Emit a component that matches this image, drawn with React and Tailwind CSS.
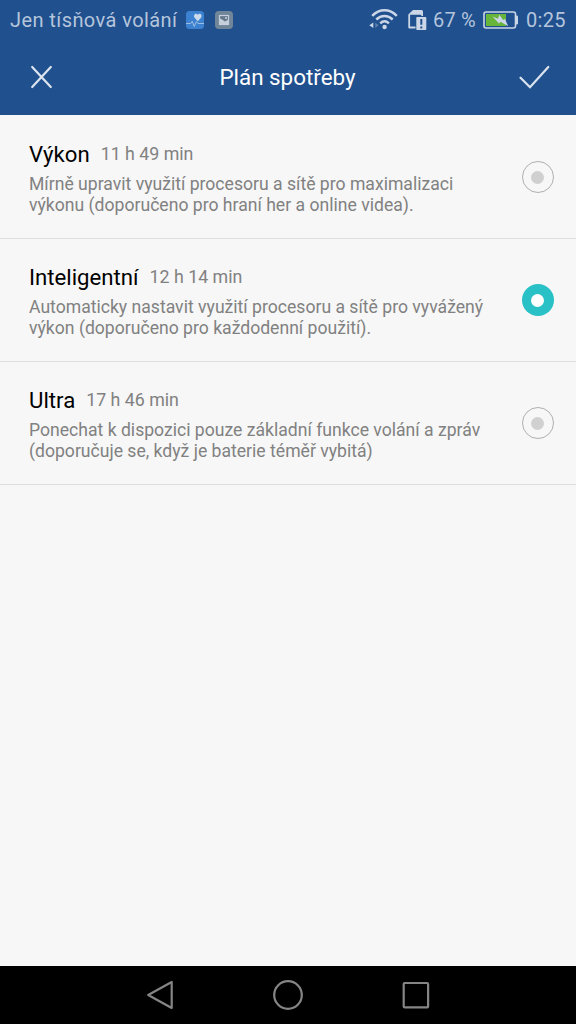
import { useState } from "react";
import clsx from "clsx";

const plans = [
  {
    id: "performance",
    title: "Výkon",
    time: "11 h 49 min",
    lines: ["Mírně upravit využití procesoru a sítě pro maximalizaci", "výkonu (doporučeno pro hraní her a online videa)."],
  },
  {
    id: "smart",
    title: "Inteligentní",
    time: "12 h 14 min",
    lines: ["Automaticky nastavit využití procesoru a sítě pro vyvážený", "výkon (doporučeno pro každodenní použití)."],
  },
  {
    id: "ultra",
    title: "Ultra",
    time: "17 h 46 min",
    lines: ["Ponechat k dispozici pouze základní funkce volání a zpráv", "(doporučuje se, když je baterie téměř vybitá)"],
  },
];

const HealthIcon = () => (
  <svg viewBox="0 0 18 18" className="h-[18px] w-[18px]">
    <rect width="18" height="18" rx="3.5" fill="#3c82d0" />
    <path d="M11.8 10.2 8.6 6.8C6.8 4.3 9.8 1.4 11.8 3.7c2-2.3 5 .6 3.2 3.1Z" fill="#ccdaec" />
    <path d="M0 12.5h4.8l1.4-2.2 2 5.2 2.2-5 1.5 2H18" fill="none" stroke="#9dbce2" strokeWidth="1" />
  </svg>
);

const PictureIcon = () => (
  <svg viewBox="0 0 18 18" className="h-[18px] w-[18px]">
    <rect width="18" height="18" rx="4" fill="#728699" />
    <rect x="4.5" y="4.5" width="9" height="9" fill="#66798c" stroke="#c6d0dc" strokeWidth="1.2" />
    <path d="M5 7.5 7.500 8.800 9.800 10.500 13 9V13H5Z" fill="#c6d0dc" />
    <circle cx="11" cy="7" r="1" fill="#c6d0dc" />
  </svg>
);

const WifiIcon = () => (
  <svg viewBox="0 0 30 22" className="h-[22px] w-[30px]" fill="none" stroke="#cbd6e7">
    <path d="M3.2 6.8C10.5-.6 20.5-.6 27.8 6.8" strokeWidth="2.5" />
    <path d="M7.3 10.5C12 5.9 19 5.9 23.7 10.5" strokeWidth="2.5" />
    <path d="M11.2 14.3C13.9 11.8 17.2 11.8 19.9 14.3" strokeWidth="2.5" />
    <circle cx="15.6" cy="18" r="2.2" fill="#cbd6e7" stroke="none" />
    <path d="M4.3 13.5v5.6L.3 16.3Z" fill="#cbd6e7" stroke="none" />
    <path d="M6.3 13.5v5.6l3.3-2.8Z" fill="#5f80ad" stroke="none" />
  </svg>
);

const SimAlertIcon = () => (
  <svg viewBox="0 0 19 21" className="h-[21px] w-[19px]" fill="#cbd6e7">
    <path d="M5 0H13.5Q15 0 15 1.5V6H13.300V4.800H2.100V16.600H7.500V18.500H1.500Q.3 18.500 .3 17.300V4.500Z" />
    <rect x="8.300" y="7" width="10" height="13" rx="0.800" />
    <path d="M13.300 9v5.800M13.300 16.400v2" stroke="#20508e" strokeWidth="2" />
  </svg>
);

const BatteryIcon = () => (
  <svg viewBox="0 0 36 18" className="h-[18px] w-[36px]">
    <rect x="1" y="1" width="31.5" height="16" rx="2" fill="none" stroke="#cbd6e7" strokeWidth="1.6" />
    <path d="M33 4.5h.8q1.2 0 1.200 1.200v6.600q0 1.200-1.200 1.200H33Z" fill="#cbd6e7" />
    <rect x="3" y="3" width="20" height="12" fill="#68b53c" />
    <path d="m9.5 5.500 5.500 2.200 1.300-4 3.800 5.300 1.900-1 3.200 7.200-7.700-4.400-1.400 1.700Z" fill="#cbd6e7" />
  </svg>
);

const StatusBar = () => (
  <div className="flex h-10 items-center text-[20px] leading-10 text-[#b5c5dc]">
    <span className="ml-[10px] w-[176px] whitespace-nowrap tracking-[0.42px]">Jen tísňová volání</span>
    <HealthIcon />
    <span className="ml-[11px]"><PictureIcon /></span>
    <span className="ml-[136px]"><WifiIcon /></span>
    <span className="ml-[9px]"><SimAlertIcon /></span>
    <span className="ml-[6px] w-[50px] whitespace-nowrap tracking-[0.2px]">67 %</span>
    <BatteryIcon />
    <span className="ml-[7px] tracking-[0.3px]">0:25</span>
  </div>
);

const Header = () => (
  <header className="h-[115px] bg-[#20508e]">
    <StatusBar />
    <div className="flex h-[75px] items-center justify-between pr-[26px] pl-[30px]">
      <button aria-label="Zavřít" className="-mt-px">
        <svg viewBox="0 0 23 24" className="h-6 w-[23px]" fill="none" stroke="#dbe4ef" strokeWidth="2.2" strokeLinecap="round">
          <path d="m2.2 2 18.6 20M20.8 2 2.2 22" />
        </svg>
      </button>
      <h1 className="pl-[4px] text-[22.4px] text-white">Plán spotřeby</h1>
      <button aria-label="Potvrdit" className="-mt-[2px]">
        <svg viewBox="0 0 32 24" className="h-6 w-8" fill="none" stroke="#dbe4ef" strokeWidth="2.2" strokeLinecap="round">
          <path d="m2.5 12.7 9.5 9.5L30.3 2" />
        </svg>
      </button>
    </div>
  </header>
);

const Radio = ({ checked }) => (
  <span
    className={clsx(
      "flex h-8 w-8 shrink-0 items-center justify-center rounded-full",
      checked ? "bg-[#2ac1c6]" : "border border-[#b0b0b0]"
    )}
  >
    <span className={clsx("h-[13px] w-[13px] rounded-full", checked ? "bg-white" : "bg-[#d0d0d0]")} />
  </span>
);

const PlanRow = ({ plan, checked, onSelect }) => (
  <li
    role="radio"
    aria-checked={checked}
    onClick={onSelect}
    className="flex h-[123px] items-center justify-between border-b border-[#dedede] pr-[22.5px] pl-[29px]"
  >
    <div className="pt-px">
      <div className="flex items-center gap-[11px] leading-7">
        <span className="text-[22.2px] text-black">{plan.title}</span>
        <span className="text-[17.8px] text-[#818181]">{plan.time}</span>
      </div>
      <p className="mt-1.5 text-[17.6px] leading-[21px] whitespace-nowrap text-[#818181]">
        {plan.lines[0]}
        <br />
        {plan.lines[1]}
      </p>
    </div>
    <Radio checked={checked} />
  </li>
);

const NavBar = () => (
  <nav className="flex h-[58px] items-center justify-between bg-black px-[145px]">
    <svg viewBox="0 0 30 32" className="h-8 w-[30px]" fill="none" stroke="#858585" strokeWidth="2.2" strokeLinejoin="round">
      <path d="M26.7 3v26L3.2 16Z" />
    </svg>
    <svg viewBox="0 0 32 32" className="h-8 w-8" fill="none" stroke="#858585" strokeWidth="2.2">
      <circle cx="16" cy="16" r="13.8" />
    </svg>
    <svg viewBox="0 0 30 32" className="h-8 w-[30px]" fill="none" stroke="#858585" strokeWidth="2.2">
      <rect x="2.7" y="4" width="24.4" height="24.4" rx="1" />
    </svg>
  </nav>
);

export default function App() {
  const [selected, setSelected] = useState("smart");

  return (
    <div className="flex h-screen flex-col bg-[#f7f7f7] font-[Roboto,sans-serif]">
      <Header />
      <ul role="radiogroup" className="flex-1 pt-px">
        {plans.map((plan) => (
          <PlanRow key={plan.id} plan={plan} checked={plan.id === selected} onSelect={() => setSelected(plan.id)} />
        ))}
      </ul>
      <NavBar />
    </div>
  );
}
